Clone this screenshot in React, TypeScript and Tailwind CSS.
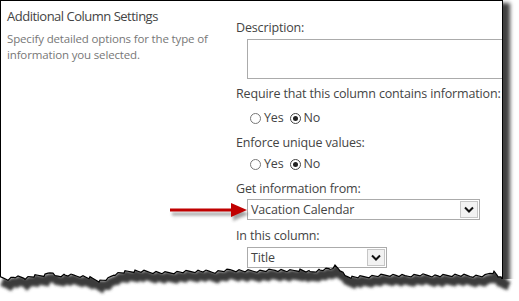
import React from "react";

// key points of the torn bottom edge (x, y)
const KEY: [number, number][] = [
  [0, 278], [8, 279], [15, 277], [25, 278], [35, 276], [45, 275], [50, 272],
  [55, 276], [65, 275], [80, 276], [90, 278], [100, 281], [108, 279],
  [115, 274], [125, 272], [135, 271], [150, 272], [165, 273], [180, 272],
  [200, 271], [215, 272], [230, 270], [245, 271], [260, 271], [275, 270],
  [290, 271], [300, 270], [310, 272], [320, 270], [330, 269], [335, 266],
  [340, 270], [345, 276], [352, 277], [360, 277], [375, 276], [390, 275],
  [405, 276], [420, 275], [440, 276], [455, 275], [470, 276], [485, 276],
  [490, 273], [494, 272], [498, 276], [502, 279],
];

function edge(): [number, number][] {
  const pts: [number, number][] = [];
  let n = 0;
  for (let k = 0; k < KEY.length - 1; k++) {
    const [x0, y0] = KEY[k];
    const [x1, y1] = KEY[k + 1];
    for (let x = x0; x < x1; x += 3) {
      const t = (x - x0) / (x1 - x0);
      const jit = (((n * 37) % 7) - 3) * 0.45;
      pts.push([x, y0 + (y1 - y0) * t + jit]);
      n++;
    }
  }
  pts.push(KEY[KEY.length - 1]);
  return pts;
}

const PTS = edge();
const line = (dx = 0, dy = 0) =>
  PTS.map(([x, y], i) => `${i ? "L" : "M"}${x + dx} ${y + dy}`).join(" ");
const below = `${line()} L503 279 L519 279 L519 301 L-1 301 Z`;

const font = { fontFamily: '"Open Sans", "Noto Sans", sans-serif' };

function Radio({ label, checked }: { label: string; checked?: boolean }) {
  return (
    <span className="flex items-center gap-[3px]">
      <span
        className={`w-[11px] h-[11px] rounded-full border flex items-center justify-center bg-white ${
          checked ? "border-[#444]" : "border-[#777]"
        }`}
      >
        {checked && <span className="w-[5px] h-[5px] rounded-full bg-[#222]" />}
      </span>
      <span>{label}</span>
    </span>
  );
}

function Select({ value, width }: { value: string; width: string }) {
  return (
    <div className={`${width} h-[21px] border border-[#ababab] flex items-stretch bg-white`}>
      <span className="flex-1 pl-[3px] leading-[19px]">{value}</span>
      <span className="w-[18px] m-[1px] border border-[#c6c6c6] bg-[#f2f2f2] flex items-center justify-center">
        <svg width="10" height="7" viewBox="0 0 10 7">
          <path d="M1 1.5 L5 5.5 L9 1.5" fill="none" stroke="#111" strokeWidth="2" />
        </svg>
      </span>
    </div>
  );
}

export default function App() {
  return (
    <div className="relative w-[519px] h-[301px] bg-white overflow-hidden text-[#444]" style={font}>
      <div className="w-[503px] h-[285px] border-l border-t border-r border-black flex overflow-hidden shadow-[7px_3px_4px_rgba(0,0,0,0.75)] bg-white">
        <div className="w-[235px] shrink-0 pl-[6px] pt-[6px]">
          <h2 className="text-[13px] leading-[18px] tracking-[-0.5px] text-[#444]">Additional Column Settings</h2>
          <p className="mt-[6px] text-[11.5px] leading-[16px] tracking-[-0.15px] text-[#777]">
            Specify detailed options for the type of
            <br />
            information you selected.
          </p>
        </div>
        <div className="flex flex-col pt-[19px] text-[12.5px] leading-[16px] tracking-[-0.15px] whitespace-nowrap">
          <div>Description:</div>
          <div className="mt-[3px] ml-[11px] w-[280px] h-[40px] border border-[#ababab]" />
          <div className="mt-[7px]">Require that this column contains information:</div>
          <div className="mt-[8px] ml-[14px] flex gap-[6px]">
            <Radio label="Yes" />
            <Radio label="No" checked />
          </div>
          <div className="mt-[9px]">Enforce unique values:</div>
          <div className="mt-[5px] ml-[14px] flex gap-[6px]">
            <Radio label="Yes" />
            <Radio label="No" checked />
          </div>
          <div className="mt-[9px]">Get information from:</div>
          <div className="mt-[2px] ml-[11px]">
            <Select value="Vacation Calendar" width="w-[233px]" />
          </div>
          <div className="mt-[8px]">In this column:</div>
          <div className="mt-[3px] ml-[11px]">
            <Select value="Title" width="w-[140px]" />
          </div>
        </div>
      </div>

      {/* annotation arrow */}
      <svg className="absolute left-[160px] top-[196px]" width="95" height="28" viewBox="160 196 95 28">
        <defs>
          <filter id="ab" x="-20%" y="-50%" width="140%" height="200%">
            <feGaussianBlur stdDeviation="1.5" />
          </filter>
        </defs>
        <g opacity="0.45" filter="url(#ab)" transform="translate(2 4)">
          <path d="M170 210 L233 210" stroke="#333" strokeWidth="3" />
          <path d="M231 203 L247 210 L231 217 Z" fill="#333" />
        </g>
        <path d="M170 210 L233 210" stroke="#c00000" strokeWidth="3" />
        <path d="M231 203 L247 210 L231 217 Z" fill="#c00000" />
      </svg>

      {/* torn bottom edge */}
      <svg className="absolute left-0 top-[250px]" width="519" height="51" viewBox="0 250 519 51">
        <defs>
          <clipPath id="below">
            <path d={below} />
          </clipPath>
          <filter id="sb" x="-5%" y="-50%" width="110%" height="200%">
            <feGaussianBlur stdDeviation="1.8" />
          </filter>
        </defs>
        <path d={below} fill="#fff" />
        <g clipPath="url(#below)" filter="url(#sb)">
          <path d={`${line(2, 5)} L509 286`} fill="none" stroke="#3a3a3a" strokeWidth="9" />
        </g>
        <path d={line()} fill="none" stroke="#000" strokeWidth="1.2" />
      </svg>
    </div>
  );
}
